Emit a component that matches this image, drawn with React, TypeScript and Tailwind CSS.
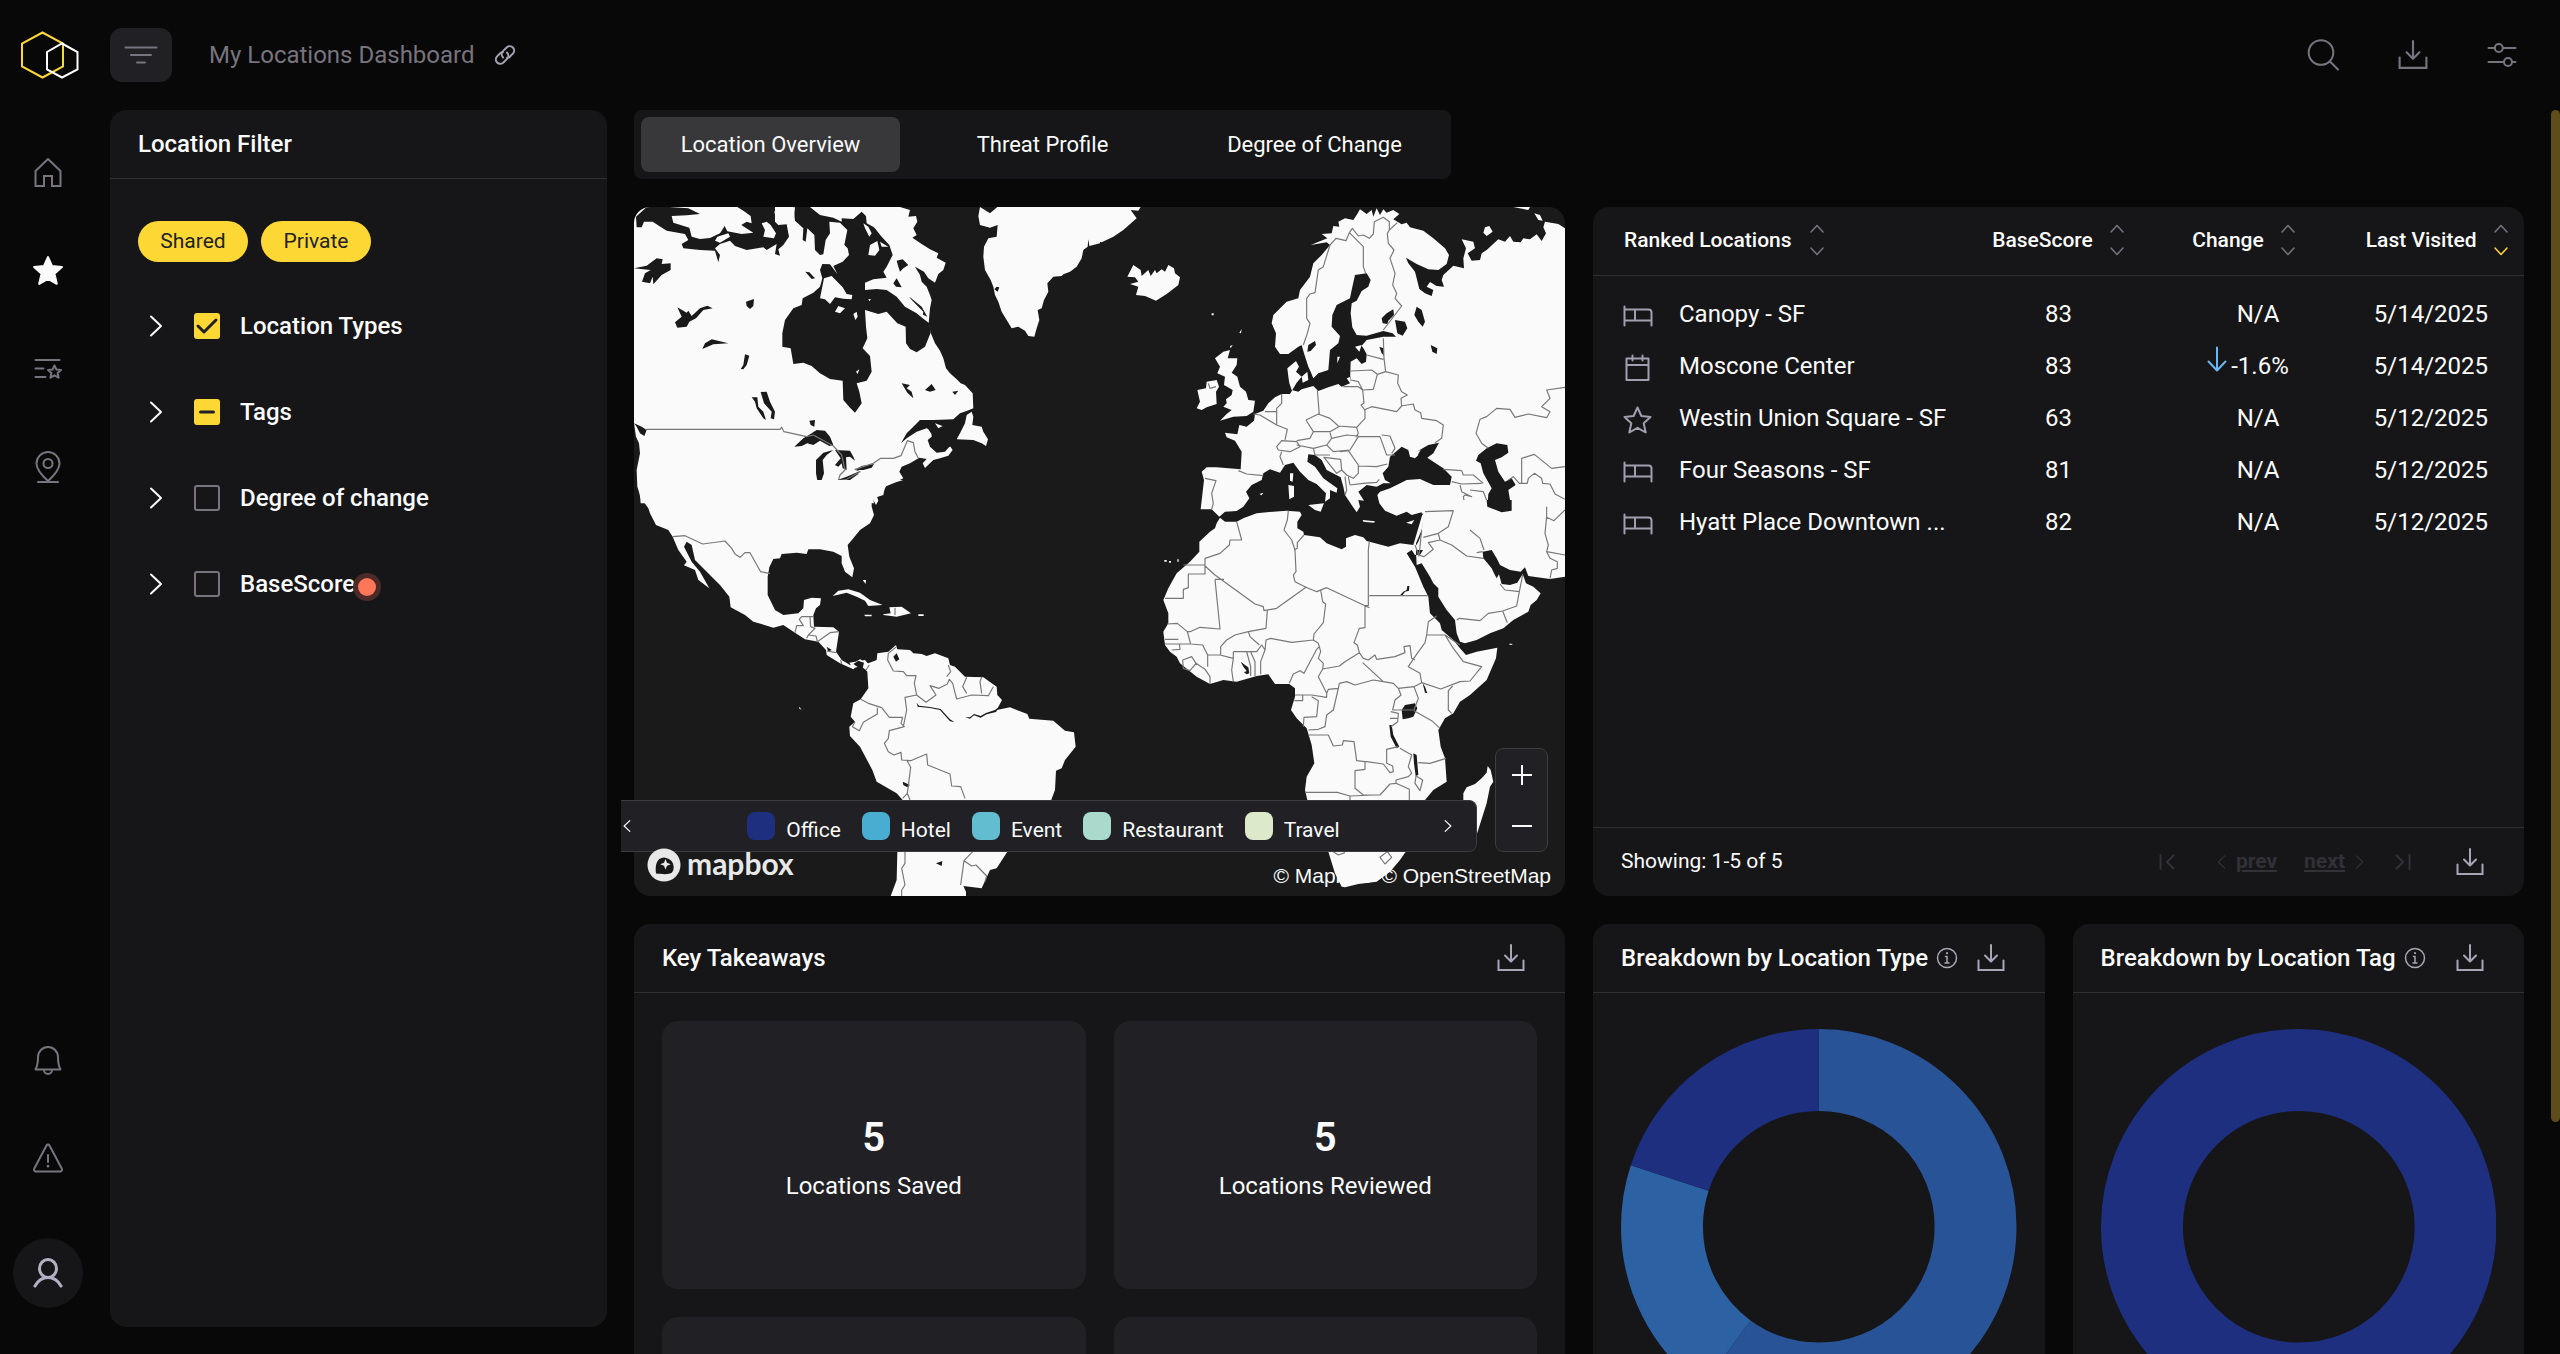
import { useState } from 'react';
import type { ReactNode } from 'react';
import clsx from 'clsx';

type IconProps = { className?: string };

function Icon({ className, box = '0 0 30 30', width = 2, children }: IconProps & { box?: string; width?: number; children: ReactNode }) {
  return (
    <svg viewBox={box} fill="none" stroke="currentColor" strokeWidth={width} strokeLinecap="round" strokeLinejoin="round" className={className} aria-hidden="true">
      {children}
    </svg>
  );
}

function Logo() {
  return (
    <svg viewBox="0 0 58 48" fill="none" strokeWidth="2" className="w-[58px] h-12" aria-hidden="true">
      <path d="M21.500 1.500 42 12.500v23L21.500 46.500 1 35.500v-23Z" stroke="#fdd835" />
      <path d="M41 12.500 56.500 21v17.500L41 46.500 26 38.500V21Z" stroke="#fff" />
    </svg>
  );
}

const HomeIcon = () => (
  <Icon className="size-[30px]"><path d="M2.500 13 15 1l12.500 12v15H19V18h-8v10H2.500Z" strokeLinejoin="miter" /></Icon>
);
const StarFilledIcon = () => (
  <Icon className="size-8 fill-current text-[#fafafa]"><path d="m15 2 3.800 8.400 9.200.9-7 6.200 2.200 9.500L15 22.300 6.800 27 9 17.500 2 11.300l9.200-.9Z" /></Icon>
);
const ListStarIcon = () => (
  <Icon className="size-[30px]">
    <path d="M2.500 6h24M2.500 14.500h8M2.500 23h10" />
    <path d="m21.500 11.500 1.900 4 4.600.5-3.400 3 1 4.700-4.100-2.400-4.100 2.400 1-4.700-3.400-3 4.600-.5Z" />
  </Icon>
);
const PinIcon = () => (
  <Icon box="0 0 30 34" className="w-[30px] h-[34px]">
    <path d="M15 31C10 26.500 3.500 19.500 3.500 13.500a11.500 11.500 0 0 1 23 0c0 6-6.500 13-11.500 17.500ZM5 32h20" />
    <circle cx="15" cy="13.500" r="4.500" />
  </Icon>
);
const BellIcon = () => (
  <Icon className="size-[30px]">
    <path d="M2.500 24.500C4.500 21 5 17 5 12a10 10 0 0 1 20 0c0 5 .5 9 2.500 12.500ZM11 25a4 4 0 0 0 8 0" />
  </Icon>
);
const AlertIcon = () => (
  <Icon className="size-[30px]">
    <path d="M13.500 2.500 1.300 25.500a2 2 0 0 0 1.700 3h24a2 2 0 0 0 1.700-3L16.500 2.500a1.700 1.700 0 0 0-3 0ZM15 12v7" />
    <path d="M15 23v.2" strokeWidth="2.600" />
  </Icon>
);
const UserIcon = () => (
  <Icon className="size-[30px] text-[#b4b0c4]" width={3}>
    <ellipse cx="15" cy="10.500" rx="8.500" ry="9" />
    <path d="M2 28c3-5.500 7-8.500 13-8.500s10 3 13 8.500" />
  </Icon>
);
const LinkIcon = () => (
  <Icon box="0 0 24 24" className="size-6 text-[#a5a2b2]">
    <path d="M10 14.500a4.700 4.700 0 0 1 .2-6.600l3.700-3.700a4.400 4.400 0 0 1 6.200 6.200l-3.300 3.300a4.400 4.400 0 0 1-2.800 1.300" />
    <path d="M14 9.500a4.700 4.700 0 0 1-.2 6.600l-3.700 3.700a4.400 4.400 0 0 1-6.200-6.200l3.300-3.300A4.400 4.400 0 0 1 10 9" />
  </Icon>
);
const SearchIcon = () => (
  <Icon box="0 0 32 32" className="size-8"><circle cx="14" cy="13.500" r="12.300" /><path d="m23 22.500 8 8" /></Icon>
);
const SlidersIcon = () => (
  <Icon className="size-[30px]">
    <path d="M1.500 8h6.300M15.800 8h12.700M1.500 22h15.500M25 22h3.500" />
    <circle cx="11.800" cy="8" r="4" />
    <circle cx="21" cy="22" r="4" />
  </Icon>
);
function DownloadIcon({ className }: IconProps) {
  return (
    <Icon box="0 0 28 28" className={className}>
      <path d="M14 1V17M8 11.500l6 6 6-6" />
      <path d="M1.500 16.500V26h25v-9.500" strokeLinejoin="miter" />
    </Icon>
  );
}
const InfoIcon = () => (
  <Icon box="0 0 22 22" width={1.500} className="size-[22px] text-[#a8a5b5]">
    <circle cx="11" cy="11" r="9.500" />
    <path d="M9.500 9.500H11V16M9 16h4" />
    <path d="M11 6v.2" strokeWidth="2" />
  </Icon>
);
const ChevronRight = ({ className }: IconProps) => (
  <Icon box="0 0 14 22" className={className}><path d="m2 1.500 10 9.500L2 20.500" /></Icon>
);
const BedIcon = () => (
  <Icon box="0 0 30 22" className="w-[30px] h-[22px]">
    <path d="M1.500 1.500v19M1.500 4.500h24a3 3 0 0 1 3 3v13M1.500 15.500h27M12 4.500v11" />
  </Icon>
);
const CalendarIcon = () => (
  <Icon box="0 0 30 28" className="w-[30px] h-7">
    <path d="M3.500 4.500h22V26h-22ZM3.500 11h22M9.500 1.500v5M19.500 1.500v5" />
  </Icon>
);
const StarIcon = () => (
  <Icon box="0 0 30 28" className="w-[30px] h-7">
    <path d="m14.500 1.500 3.900 8.500 9.100 1-6.800 6.200 2 9.300-8.200-4.700-8.200 4.700 2-9.300L1.500 11l9.100-1Z" />
  </Icon>
);

function SortIcon({ active }: { active?: boolean }) {
  return (
    <Icon box="0 0 16 32" width={1.500} className="w-4 h-8 text-[#77747f] shrink-0">
      <path d="m2 8 6-6.500L14 8" />
      <path d="m2 24 6 6.500 6-6.500" className={active ? 'stroke-[#fdd835]' : undefined} />
    </Icon>
  );
}

const topNav = [
  { label: 'Home', icon: HomeIcon },
  { label: 'Saved', icon: StarFilledIcon },
  { label: 'Lists', icon: ListStarIcon },
  { label: 'Places', icon: PinIcon },
];

const bottomNav = [
  { label: 'Notifications', icon: BellIcon },
  { label: 'Alerts', icon: AlertIcon },
];

const tabs = ['Location Overview', 'Threat Profile', 'Degree of Change'];

const filters = [
  { label: 'Location Types', state: 'on' },
  { label: 'Tags', state: 'mixed' },
  { label: 'Degree of change', state: 'off' },
  { label: 'BaseScore', state: 'off', cursor: true },
];

const legend = [
  { label: 'Office', color: 'bg-[#1e2f80]' },
  { label: 'Hotel', color: 'bg-[#48add0]' },
  { label: 'Event', color: 'bg-[#62bdd0]' },
  { label: 'Restaurant', color: 'bg-[#a9dacc]' },
  { label: 'Travel', color: 'bg-[#dceacb]' },
];

const locations = [
  { icon: BedIcon, name: 'Canopy - SF', score: 83, change: 'N/A', visited: '5/14/2025' },
  { icon: CalendarIcon, name: 'Moscone Center', score: 83, change: '-1.6%', down: true, visited: '5/14/2025' },
  { icon: StarIcon, name: 'Westin Union Square - SF', score: 63, change: 'N/A', visited: '5/12/2025' },
  { icon: BedIcon, name: 'Four Seasons - SF', score: 81, change: 'N/A', visited: '5/12/2025' },
  { icon: BedIcon, name: 'Hyatt Place Downtown ...', score: 82, change: 'N/A', visited: '5/12/2025' },
];

const takeaways = [
  { value: '5', label: 'Locations Saved' },
  { value: '5', label: 'Locations Reviewed' },
  { value: '', label: '' },
  { value: '', label: '' },
];

// Map sheets, three units to a pixel. Every sheet has its own origin.
const sheets = [
  {
    id: 'north-america',
    transform: 'translate(-14 -117) scale(.33333)',
    land: [
      'M42 351H840L870 360 865 380 888 378 892 395 880 415 890 435 877 443 905 462 930 478 955 490 950 503 977 518 970 540 955 552 945 578 925 565 912 545 885 530 900 555 905 575 920 590 930 615 935 630 930 655 926 700 932 728 945 760 960 782 970 805 978 835 990 850 1010 868 1022 880 1035 885 1058 910 1060 955 1040 963 1020 970 1000 988 940 990 900 990 880 1010 860 1030 843 1060 860 1045 890 1025 920 1015 935 1022 935 1040 923 1050 930 1070 950 1088 975 1085 990 1068 998 1080 985 1097 960 1105 940 1110 915 1134 908 1120 920 1107 898 1103 870 1120 845 1130 838 1145 850 1165 820 1180 795 1190 790 1215 760 1225 762 1240H62L60 1215 52 1190 50 1140 60 1090 57 1060 48 1040 42 1000Z',
      'M1055 965 1060 980 1057 1005 1085 1010 1090 1025 1104 1048 1098 1068 1085 1060 1060 1050 1010 1048 1020 1030 1035 1000 1040 975Z',
      'M1080 351 1110 370 1132 351H1440V460L1408 468 1405 448 1403 470 1390 480 1385 505 1370 530 1350 545 1330 553 1325 558 1300 560 1282 580 1285 605 1272 630 1265 655 1253 660 1258 690 1250 715 1243 740 1225 738 1215 722 1195 710 1175 715 1160 690 1145 665 1135 635 1125 615 1120 590 1112 570 1095 540 1090 500 1092 470 1105 445 1130 440 1133 405 1110 413 1080 405 1075 378Z',
    ],
    water: [
      'M148 351 205 355 240 372 200 376 155 378 160 398 208 413 215 440 240 447 270 444 300 430 314 408 322 424 365 432 400 428 364 405 380 395 395 400 392 378 370 362 352 351H465V395L475 405 500 403 507 440 490 465 475 478 480 497 465 492 470 462 440 480 430 472 380 480 345 468 330 452 300 462 285 475 300 495 295 517 285 482 240 480 190 475 185 462 205 450 195 432 140 422 98 395 72 395 65 412 50 412 48 380 80 351Z',
      'M520 351H570L600 375 640 383 665 395 665 385 700 387 725 365 738 378 740 400 762 412 785 440 808 465 818 495 800 530 790 545 800 563 760 568 735 578 735 600 770 597 800 600 830 620 855 650 890 670 908 685 928 700 932 728 915 770 890 787 870 777 858 760 857 710 832 700 800 665 775 672 735 660 738 710 742 745 728 775 750 798 755 845 740 872 710 880 718 905 725 940 705 968 690 953 670 930 668 872 630 867 600 850 575 828 550 818 520 822 512 775 487 770 487 730 495 690 520 655 545 645 548 625 580 608 600 590 607 565 600 540 607 522 630 523 652 552 640 528 668 515 687 495 683 475 673 465 682 420 660 398 628 395 630 430 617 450 610 493 600 495 585 480 583 435 562 415 557 455 548 450 550 415 525 392Z',
      'M42 535 80 527 110 505 128 508 125 522 152 520 152 540 125 555 100 583 98 560 90 580 66 575 75 550 92 540 70 538Z',
      'M172 652 200 668 205 662 215 678 240 655 262 647 278 655 250 660 228 685 208 695 200 710 172 713 165 697 185 680Z',
      'M247 777 255 760 275 748 325 760 280 763Z',
      'M378 635 402 627 400 648 390 657 380 648Z',
      'M375 793 388 797 380 825 370 838 362 837 370 825Z',
      'M422 906 440 905 450 935 465 965 462 988 452 985 455 965 432 940Z',
      'M395 922 412 922 415 950 430 965 438 990 430 985 410 955 405 935Z',
      'M568 992 585 990 583 1010 572 1005Z',
      'M523 1070 550 1045 575 1030 590 1020 615 1022 630 1040 640 1065 628 1068 600 1052 580 1065 562 1060 545 1068Z',
      'M588 1110 610 1088 640 1080 620 1095 608 1110 612 1150 605 1170 592 1172 588 1150Z',
      'M645 1080 690 1082 700 1100 705 1112 690 1100 678 1102 680 1140 668 1135 665 1120 655 1130 645 1125 662 1105Z',
      'M652 1170 680 1160 715 1145 715 1152 690 1170 665 1178Z',
      'M705 1140 725 1128 762 1122 755 1133 730 1140Z',
      'M845 880 870 885 860 895 875 905 880 925 862 908Z',
      'M915 900 935 882 947 900 930 905Z',
      'M830 512 848 508 865 525 850 535 840 545 835 530Z',
      'M820 580 830 565 845 592 828 590Z',
      'M868 620 905 650 922 680 905 672 880 642Z',
      'M997 905 1015 902 1005 915Z',
      'M42 1000 65 1010 80 1020 73 1038 60 1030 50 1010Z',
      'M556 545 568 547 585 565 575 567Z',
      'M930 1005 970 1010 1000 1000 1030 985 1010 1045 1015 1062 990 1070 955 1080 930 1060 940 1040 920 1010Z',
      'M1130 590 1138 592 1133 605 1123 598Z',
    ],
    islets: [
      'M600 625 612 565 635 558 668 592 680 612 697 615 695 628 670 626 645 622 630 642 615 628Z',
      'M645 665 655 648 675 655 660 670Z',
      'M700 672 710 665 713 680 706 690Z',
      'M745 495 750 465 772 453 778 480 765 497Z',
      'M425 400 440 395 452 405 468 430 462 445 430 440 435 420Z',
      'M285 452 292 440 325 430 330 440 300 458Z',
      'M463 365 475 352 525 352 522 385 495 403 470 393Z',
      'M730 400 745 410 755 430 748 440 735 415Z',
      'M780 455 805 470 785 470Z',
      'M870 625 910 665 908 678 875 660 862 640Z',
      'M708 845 718 838 713 852Z',
      'M945 1000 968 1008 955 1015Z',
      'M745 628 753 627 748 634Z',
    ],
    borders: ['M75 1018H480L485 1012 492 1025 560 1040 580 1035 640 1068 665 1095 675 1140 660 1155 655 1172 680 1168 720 1145 705 1138 760 1120 782 1105H820L843 1097 862 1052 880 1058 885 1085 895 1105'],
  },
  {
    id: 'europe',
    transform: 'translate(466 -17) scale(.33333)',
    land: [
      'M1395 115 1375 102 1335 95 1330 112 1338 130 1325 153 1310 133 1290 148 1270 145 1262 157 1240 155 1230 138 1215 155 1195 148 1160 180 1145 190 1140 210 1115 212 1103 190 1125 175 1120 155 1085 148 1098 175 1090 205 1092 235 1060 227 1030 255 1025 270 1032 290 1010 288 990 276 980 290 1000 300 995 318 975 310 958 297 950 265 945 245 925 220 918 203 950 222 985 238 1015 240 1040 222 1047 195 1035 175 1000 145 970 122 930 112 920 98 905 103 880 88 898 72 880 60 860 68 850 58 840 75 830 55 820 80 815 60 800 72 780 58 770 75 760 90 735 85 715 95 718 110 700 108 695 130 665 132 682 145 632 165 680 157 690 165 665 195 640 220 630 260 600 300 595 325 560 335 520 375 515 400 528 430 525 470 540 492 565 492 595 470 605 465 612 490 625 530 632 545 640 565 655 550 685 540 690 480 715 460 720 438 695 410 697 375 710 345 750 325 755 300 765 255 800 250 812 270 805 290 785 303 770 332 755 340 752 370 757 412 770 435 800 437 850 423 878 430 888 440 850 440 800 450 785 467 792 478 800 493 798 515 785 522 770 505 752 515 750 580 725 590 715 582 685 592 655 603 640 588 605 598 595 605 575 600 568 580 565 560 562 535 588 513 597 530 588 545 605 560 590 578 570 612 545 612 525 622 505 640 490 662 465 672 462 692 440 710 418 705 412 733 375 728 380 742 405 752 425 785 422 838 350 832 320 832 305 845 312 870 302 958 335 958 358 980 375 965 410 963 430 950 448 925 438 905 455 885 485 870 490 850 510 838 540 848 555 825 580 818 600 845 625 870 650 882 678 910 675 935 690 925 690 900 710 908 712 895 670 865 645 830 622 815 625 793 645 795 665 810 680 840 722 862 730 890 735 915 755 945 770 967 780 950 775 930 792 932 775 905 790 893 800 885 830 890 850 880 872 880 855 870 848 850 865 830 870 800 905 770 925 780 930 800 945 805 955 795 950 785 985 765 1017 758 1000 790 982 803 1000 815 1030 835 1055 860 1050 885 1000 885 960 867 920 870 890 885 870 895 840 905 832 915 838 940 855 962 890 977 920 965 935 975 970 965 968 985 965 1030 955 1055 940 1080H1395Z',
      'M370 485 390 480 383 505 412 505 410 525 395 548 412 560 420 590 438 605 445 630 465 632 460 665 440 678 400 680 360 692 380 672 395 660 370 650 380 640 378 628 395 615 398 600 372 585 375 560 352 550 360 530 345 505Z',
      'M290 655 300 635 292 600 318 595 320 575 350 570 357 590 348 605 350 642 320 652 305 660Z',
      'M82 260 100 225 122 240 125 258 145 240 152 258 165 240 170 250 185 238 195 245 205 225 222 235 225 250 240 262 235 285 200 312 168 332 135 318 108 315 115 290 90 282 115 275 105 262Z',
      'M0 51H122L115 62 92 60 110 85 70 120 40 140 5 157 0 155Z',
      'M570 850 580 850 578 875 570 872ZM565 885 582 888 582 920 568 928Z',
      'M625 945 672 940 662 965 645 960Z',
      'M788 990 825 994 822 998 790 995ZM918 998 943 990 935 1003Z',
      'M440 912 450 910ZM478 912 490 908 485 916Z',
      'M1155 112 1168 108 1178 125 1160 138 1150 128Z',
      'M1240 51H1290L1285 60ZM1303 70 1320 75 1328 92 1315 90Z',
      'M605 560 622 545 625 570 608 578ZM712 500 720 500 712 520ZM335 370H341V376H335ZM418 428 425 417 423 430ZM390 468 398 465 392 475Z',
      'M740 565 752 560 750 580ZM765 470 785 465 778 485Z',
    ],
    water: [
      'M1160 775 1190 760 1222 765 1225 788 1205 802 1185 810 1195 845 1215 875 1235 865 1247 885 1225 900 1235 960 1208 968 1162 950 1165 912 1175 895 1150 850 1142 820 1128 812 1135 795Z',
      'M885 390 915 395 922 415 908 437 892 430Z',
      'M950 350 965 360 975 395 968 410 955 395 943 375Z',
      'M992 465 1012 475 1010 492 997 485Z',
      'M845 385 860 370 880 358 882 375 865 392 862 402 848 400Z',
      'M625 465 645 453 648 465 632 483 622 485Z',
      'M838 470 850 475 852 497 845 490Z',
    ],
    islets: ['M935 790 962 780 950 800Z'],
    borders: [
      'M610 465 622 430 630 400 620 385V325L630 312 645 308 655 240 670 230 690 165 708 145 738 152 748 128 757 115 775 138 790 135 808 145 820 132 823 95 850 82 868 95V120L892 98',
      'M748 128 790 170V230L797 250',
      'M868 120 862 130 865 160 882 180 870 205 885 250 878 285 890 310 885 325 905 348 850 420',
      'M850 445 852 505 857 545 895 555 893 580 905 605 922 615 903 625 905 648 890 665 815 650 792 660M903 648 940 642 945 660 962 668 965 685 1010 692 1030 705 1025 745 1005 758',
      'M800 495 850 508M752 543 815 540 832 553 857 545M832 553 820 598 788 600 775 575 752 570M730 590H775L788 600 792 640 783 645 795 660V685L770 712 775 730 768 742',
      'M652 600 658 675M618 690 655 672 690 685 715 708 770 712M618 690 640 725 690 725 720 708M640 725 630 745 590 752M530 770 545 752 590 755 600 770 570 785 535 780ZM690 728 695 745 740 735 775 738M695 745 680 765 640 775 590 765M680 765 700 785 750 780 775 740 840 740 860 795 885 795',
      'M545 612V640L530 655V705L562 718 555 750M530 705 480 675 460 672M495 665 530 665M545 785 540 800 550 825M415 842 440 852 490 857M315 865 348 872 335 910 340 940 335 958',
      'M640 775 645 795 690 795M672 802 722 808 725 840 710 850ZM720 785 745 782 775 825V850L760 865 740 855 725 840M775 828 830 830 862 822M735 860 740 900 735 915M750 885 790 880 830 877 838 868M745 860 750 885M845 735 870 738 885 775 875 790',
      'M1395 592 1340 600 1350 625 1325 650 1350 665 1340 683 1285 672 1245 682 1230 658 1190 655 1160 680 1140 688 1128 730 1145 760 1165 775',
      'M1265 880V805L1303 793 1355 835 1395 830M1235 950 1280 938 1315 942 1340 970M1225 870 1240 860 1258 880 1282 880 1285 865 1303 850 1325 865 1328 880 1350 882 1365 912 1395 928M1030 838 1085 842 1090 855 1120 855 1150 880M1055 875 1085 882 1145 880M1080 885 1085 905 1115 920 1095 915 1090 920 1097 958 975 965M1110 900 1150 905 1162 935M1097 958 1122 985 1110 1020 1140 1045 1150 1080',
      'M325 580 330 595 348 590',
    ],
  },
  {
    id: 'south-america',
    transform: 'translate(-14 273) scale(.33333)',
    land: [
      'M55 0H850L800 15 790 35 768 40 775 62 768 75 755 50 755 80 762 105 750 130 720 150 700 175 683 195 688 230 702 265 697 292 675 275 665 250 665 228 640 215 600 208 565 208 560 222 530 218 485 222 480 235 460 237 448 262 443 290 443 345 465 390 490 405 535 400 550 385 552 360 575 353 603 355 600 375 588 385 580 405 582 440 640 442 657 455 648 515 665 540 690 555 720 538 745 550 770 540 772 520 805 515 828 495 832 508 870 510 880 520 905 522 920 528 945 520 985 535 990 555 1005 560 1035 590 1090 592 1130 620 1132 645 1146 660 1130 690 1170 682 1222 702 1228 716 1300 722 1335 752 1362 757 1367 800 1335 840 1325 865 1308 872 1305 930 1290 970 1230 1050 1160 1118 1130 1165 1110 1170 1085 1225 1030 1218 1038 1235V1248H812L830 1200 832 1115 848 960 830 940 770 905 757 870 720 800 690 768 688 740 705 725 692 710 700 670 722 658 745 625 742 575 720 550 700 568 660 550 620 525 618 510 595 485 555 478 525 458 490 435 460 443 400 425 375 405 332 382 328 350 300 315 270 285 225 240 215 195 200 185 192 200 215 245 240 275 268 325 235 300 225 270 192 256 200 245 175 210 158 170 145 150 108 135 90 100 85 85 60 50Z',
      'M638 348 655 332 685 328 720 338 750 360 788 375 745 378 735 362 710 350 680 338Z',
      'M790 403 812 400 808 382 845 380 873 400 830 410 790 405ZM733 404H755V409H735ZM895 403H911V408H895ZM728 300 738 300 737 312ZM538 680 545 690 537 685Z',
      'M688 548 705 545 735 540 748 555 738 570 722 558 700 565Z',
    ],
    water: [
      'M820 530 830 520 838 538 828 545Z',
      'M620 500 635 510 625 515Z',
      'M848 905 870 915 862 922 850 915Z',
      'M948 1150 967 1143 965 1158Z',
      'M700 552 715 542 732 548 728 565 712 560Z',
      'M890 668 893 680 930 684 960 690 990 724 1003 726 990 718 962 687 930 681 897 677ZM1035 712 1050 716 1062 706 1082 713 1100 703 1128 696 1138 680 1125 690 1098 699 1082 708 1062 702 1050 712Z',
    ],
    islets: [],
    borders: [
      'M158 170 195 167 248 192 315 183 335 205 345 222 360 232 375 218H390L422 275 450 281',
      'M525 458 530 437 550 437 538 418 545 410H580M570 410 572 440 585 445 565 465 560 475M565 465 588 468 592 485 630 458 657 455M620 513 648 518M662 540 665 552M738 570 748 555',
      'M830 500 805 520 803 540 820 573 850 575 860 587H888L883 610 890 645 855 652 860 690 850 740M722 658 745 670 785 683 808 712 848 712 843 730 853 740 808 752 805 775 793 790 805 815 822 825 843 817 845 840 872 842 920 822 923 855 990 882 995 918 1022 920 1035 955M772 683V702L730 727 718 752 697 740 705 725',
      'M890 645 918 667 948 645 930 617 957 625 982 612 988 598 998 610 1005 638 1010 657 1055 645 1105 647 1120 620M985 555 992 575 980 590M1040 592 1028 620 1040 640M1085 592 1080 605 1085 640',
      'M860 840 872 862 862 940 848 955M862 940 870 960M855 1115V1150L845 1165 855 1215 845 1230V1248M1058 1115 1032 1142 1022 1215M1032 1142 1055 1158 1068 1155 1100 1188 1095 1205M825 383V405',
    ],
  },
  {
    id: 'africa',
    transform: 'translate(466 273) scale(.33333)',
    land: [
      'M360 113 375 125 410 125 430 115 470 100 520 95 560 92 600 95 605 105 592 125 592 145 610 155 612 165 660 172 680 190 725 208 738 200 738 175 765 165 790 172 800 183 865 200 900 190 940 195 968 100H975V200L960 225 945 225 935 210 920 220 945 260 970 320 985 350 990 400 1020 430 1025 450 1060 480 1080 505 1098 525 1130 515 1192 503 1188 535 1160 600 1110 645 1080 665 1060 700 1035 715 1015 750 1022 800 1035 835 1040 905 1000 930 975 960 975 1000 950 1080 915 1118 900 1140 870 1175 830 1205 775 1212 735 1222 725 1220 705 1180 685 1115 650 1040 622 960 615 930 620 890 643 850 635 795 620 745 590 715 573 690 585 650 585 625 568 612 525 612 505 583 470 588 410 605 370 600 330 612 290 590 240 550 230 530 210 515 195 495 190 455 205 430 205 400 190 360 205 325 230 280 270 245 298 215 298 185 330 155 345 145 350 130Z',
      'M965 60V100L972 110 965 150 948 190 948 215 950 255 965 250 990 290 1000 310 1015 325 1015 350 1040 390 1065 420 1070 460 1080 485 1095 490 1130 480 1170 460 1210 445 1240 420 1285 395 1292 375 1310 360 1322 340 1300 320 1278 310 1268 282 1252 308 1230 315 1205 312 1197 283 1190 295 1182 280 1175 265 1150 235 1148 215 1175 210 1190 235 1200 255 1230 270 1262 275 1275 262 1285 288 1350 297 1395 290V60Z',
      'M1090 940 1100 922 1125 912 1145 895 1160 878 1163 858 1172 870 1180 905 1170 920 1160 970 1132 1058 1110 1040 1090 980Z',
      'M1228 491H1237V494H1228ZM193 240H200V245H193ZM207 243H213V248H207ZM232 238H236V245H232Z',
    ],
    water: [
      'M905 690 915 675 945 670 952 685 940 710 925 715 908 718Z',
      'M868 735 875 735 880 765 898 800 890 805 872 770Z',
      'M940 820 950 825 955 885 947 888 942 850Z',
      'M968 610 975 620 982 640 975 638Z',
      'M422 545 435 555 445 562 448 580 440 583 432 577 440 573 430 560Z',
      'M898 348 910 335 920 330 922 318 928 318 927 332 915 335 908 345Z',
      'M1160 60H1235V92L1205 97 1162 80Z',
    ],
    islets: [],
    borders: [
      'M410 125 425 180H390L388 195 360 220 315 235V258L345 285 465 372 490 380 492 392 530 385 618 322 585 305 580 285 588 275 585 210 575 180 552 150 562 120 565 92M582 210 592 205V188L612 165',
      'M195 355H250V328L265 323V282H315V255H250M345 298 360 447 300 442 270 455 262 455 232 430 202 432M345 298H372M502 392 498 445 445 455 405 465 380 480 362 500 362 525',
      'M618 322 650 335 680 323 808 383M662 330 668 365 677 372 670 428 642 462 640 480 575 487 512 475 498 480 495 510 482 545V583M808 183 805 210V377H795V443L778 445 762 488 772 495 778 518 735 545 718 558 668 567M808 347H985',
      'M262 455 272 492 308 495 323 525 360 525 400 535 395 570 400 605M195 492H272M195 478 235 478M215 510 240 508 238 492M248 540 275 530 288 550 270 572 250 565ZM288 550 315 568 330 590V612M323 525V560M400 515H440L452 560V588M400 515V535M452 515 465 545V588M440 515H470L485 495 495 510M445 455 450 470 478 495',
      'M568 610 580 582 600 572 612 580 650 508 658 500 662 515 655 535 670 550 668 567 655 590 680 640V652L635 645H585M640 480 655 490 662 515M608 645V662H583M680 640 685 628 715 625 718 610 740 605 765 615 820 600 850 605 788 548M715 625 700 690 680 705 675 740 655 748 625 750M635 650 655 662 650 710 612 712 610 740M625 765H685L700 798 727 795 730 782 762 785 770 842 795 845 800 845 850 852 870 878 880 875 878 858 860 850 860 808 895 800',
      'M778 518 790 535 805 540 825 525 830 538 885 530 915 518 912 500 930 497 935 535 945 540M850 605 880 610 895 625 942 620 965 608 1022 627 1080 605 1110 603 1145 560 1090 545 1060 505 1035 465 980 465 975 488 945 530 925 560 960 580 965 608M980 465 985 425 1010 408M1035 465 1080 495M1058 618 1045 632V690L1055 700M895 625 903 645 885 660 878 690H942L955 655 942 620M942 692 995 722 1020 745M872 695 895 700 893 725 873 740M870 715H893',
      'M795 845V868L765 872V925L790 945 840 945 870 912 888 910 888 900 925 890 935 880 925 860 935 825 900 805M888 910 928 928V960M955 848 990 850 1038 835M948 888 968 900 960 932 945 910ZM615 937H712L750 948 820 945M750 960V948M840 1132 862 1115 875 1132 855 1152ZM700 1115 715 1125 735 1118',
      'M975 95 1060 92 1045 140 1015 160 970 172M1015 160 1020 180 985 188 1000 208 972 230 955 225M1020 180 1055 195 1100 228 1150 235M1130 218 1148 215M1070 420 1078 415 1140 422 1165 400 1208 393 1222 428M1208 393 1250 378 1258 335 1215 330 1200 312M1258 335 1268 285M1340 80V110L1335 160 1345 195 1340 215 1395 225M1340 112 1362 122 1395 90M1340 215 1350 235 1372 245V265L1355 270 1350 295M1110 150 1140 175 1152 210M945 195 957 228 965 150',
    ],
  },
];

function WorldMap() {
  return (
    <svg viewBox="0 0 931 689" preserveAspectRatio="xMidYMid slice" className="size-full rounded-2xl bg-[#1a1a1a]" role="img" aria-label="World map">
      {sheets.map((sheet) => (
        <g key={sheet.id} transform={sheet.transform} strokeLinejoin="round">
          <path d={sheet.land.join('')} fill="#fafafa" />
          <path d={sheet.water.join('')} fill="#1a1a1a" />
          <path d={sheet.islets.join('')} fill="#fafafa" />
          <path d={sheet.borders.join('')} fill="none" stroke="#777" strokeWidth="3.500" />
        </g>
      ))}
    </svg>
  );
}

function MapboxLogo() {
  return (
    <a href="#mapbox" className="flex items-center gap-1.5 text-[#e8e8e8]">
      <svg viewBox="0 0 34 34" className="size-[34px]" aria-hidden="true">
        <circle cx="17" cy="17" r="16.500" fill="#e8e8e8" />
        <path d="M9 25.500c-.8-7 .2-11.500 3-14.300a9.500 9.500 0 0 1 13 13.400c-2.800 2-8.500 1.800-16 .9Z" fill="#161616" />
        <path d="m18.500 11 1.500 3.800 3.800 1.500-3.800 1.500-1.500 3.800-1.500-3.800-3.800-1.500 3.800-1.500Z" fill="#e8e8e8" />
      </svg>
      <span className="font-[Lato,sans-serif] font-bold text-[30px] leading-8 pb-1">mapbox</span>
    </a>
  );
}

function MapPanel() {
  return (
    <section className="relative h-[689px]">
      <WorldMap />
      {/* Legend */}
      <div className="absolute -left-[13px] bottom-[44px] w-[856px] h-[52px] flex items-center justify-between bg-[#212125] border-y border-r border-[#3b3b40] rounded-r-lg pr-6">
        <button type="button" aria-label="Previous" className="pl-0.5">
          <ChevronRight className="w-2 h-[14px] rotate-180" />
        </button>
        <ul className="flex items-center gap-[21px] pl-3">
          {legend.map(({ label, color }) => (
            <li key={label} className="flex items-center gap-[11px]">
              <span className={clsx('size-7 rounded-lg', color)} />
              <span className="text-[21px] leading-7 pt-2">{label}</span>
            </li>
          ))}
        </ul>
        <button type="button" aria-label="Next">
          <ChevronRight className="w-2 h-[14px]" />
        </button>
      </div>
      {/* Zoom */}
      <div className="absolute right-[17px] bottom-[44px] w-[53px] h-[104px] flex flex-col bg-[#212125] border border-[#3b3b40] rounded-lg">
        <button type="button" aria-label="Zoom in" className="flex-1 grid place-items-center">
          <Icon box="0 0 20 20" className="size-5"><path d="M10 .5v19M.5 10h19" /></Icon>
        </button>
        <button type="button" aria-label="Zoom out" className="flex-1 grid place-items-center">
          <Icon box="0 0 20 20" className="size-5"><path d="M.5 10h19" /></Icon>
        </button>
      </div>
      <div className="absolute left-[13px] bottom-[13px]">
        <MapboxLogo />
      </div>
      <p className="absolute right-3.5 bottom-1.5 flex gap-3 font-['Liberation_Sans',sans-serif] text-[21px] leading-7 text-[#fafafa]">
        <a href="#mapbox">© Mapbox</a>
        <a href="#osm">© OpenStreetMap</a>
      </p>
    </section>
  );
}

function FilterPanel() {
  return (
    <aside className="w-[497px] shrink-0 mb-[27px] rounded-2xl bg-[#161618]">
      <h2 className="h-[69px] flex items-center px-7 border-b border-[#303034] text-2xl font-medium">Location Filter</h2>
      <div className="px-7 pt-[42px]">
        <div className="flex gap-[13px]">
          {['Shared', 'Private'].map((label) => (
            <button key={label} type="button" className="h-[41px] w-[110px] rounded-full bg-[#fdd835] text-[#212125] text-[21px]">
              {label}
            </button>
          ))}
        </div>
        <ul className="pt-[21px]">
          {filters.map(({ label, state, cursor }) => (
            <li key={label} className="h-[86px] flex items-center">
              <button type="button" aria-label={'Expand ' + label} className="w-14 pl-[11px]">
                <ChevronRight className="w-[14px] h-[22px]" />
              </button>
              <label className="relative flex items-center gap-5 text-2xl font-medium">
                <input
                  type="checkbox"
                  defaultChecked={state !== 'off'}
                  className={clsx(
                    'appearance-none size-[26px] rounded-[3px]',
                    state === 'off' ? 'border-2 border-[#77747f]' : 'bg-[#fdd835]'
                  )}
                />
                {state !== 'off' && (
                  <Icon box="0 0 26 26" width={3} className="absolute left-0 top-[3px] size-[26px] text-[#212125] pointer-events-none">
                    <path d={state === 'on' ? 'm4 13 6 6L22 7' : 'M6.500 13h13'} />
                  </Icon>
                )}
                {label}
                {cursor && (
                  <span className="absolute -right-[26px] top-[5px] size-7 rounded-full bg-[#4b2a28] grid place-items-center">
                    <span className="size-[18px] rounded-full bg-[#ff7659]" />
                  </span>
                )}
              </label>
            </li>
          ))}
        </ul>
      </div>
    </aside>
  );
}

function RankedLocations() {
  return (
    <section className="h-[689px] flex flex-col rounded-2xl bg-[#161618]">
      <table className="w-full table-fixed text-2xl">
        <colgroup>
          <col className="w-[41%]" />
          <col className="w-[18%]" />
          <col className="w-[24%]" />
          <col className="w-[17%]" />
        </colgroup>
        <thead>
          <tr className="h-[68px] border-b border-[#303034] text-[21px]">
            <th className="pl-[31px] pb-0.5 font-medium">
              <button type="button" className="flex items-center gap-[17px]">Ranked Locations <SortIcon /></button>
            </th>
            <th className="pb-0.5 font-medium">
              <button type="button" className="flex items-center gap-4 mx-auto">BaseScore <SortIcon /></button>
            </th>
            <th className="pb-0.5 font-medium pr-5">
              <button type="button" className="flex items-center gap-4 mx-auto">Change <SortIcon /></button>
            </th>
            <th className="pb-0.5 font-medium pr-4">
              <button type="button" className="flex items-center gap-4 ml-auto whitespace-nowrap">Last Visited <SortIcon active /></button>
            </th>
          </tr>
        </thead>
        <tbody className="before:block before:h-3">
          {locations.map(({ icon: RowIcon, name, score, change, down, visited }) => (
            <tr key={name} className="h-[52px]">
              <td className="pl-[30px]">
                <span className="flex items-center gap-[26px] whitespace-nowrap">
                  <span className="text-[#a19eb0] pt-1"><RowIcon /></span>
                  {name}
                </span>
              </td>
              <td className="text-center">{score}</td>
              <td className={clsx('text-center', down ? 'pr-3' : 'pl-2')}>
                <span className="inline-flex items-center gap-1">
                  {down && (
                    <Icon box="0 0 20 26" className="w-5 h-[26px] mb-3.5 text-[#6cb8ee]">
                      <path d="M10 1.500V24M1.500 15.500l8.500 9 8.500-9" />
                    </Icon>
                  )}
                  {change}
                </span>
              </td>
              <td className="text-right pr-[36px]">{visited}</td>
            </tr>
          ))}
        </tbody>
      </table>
      <footer className="mt-auto h-[69px] flex items-center justify-between border-t border-[#303034] pl-7 pr-10 text-[21px]">
        <span>Showing: 1-5 of 5</span>
        <div className="flex items-center text-[#313137]">
          <button type="button" disabled aria-label="First page" className="mr-[42px]">
            <Icon box="0 0 16 16" className="size-4"><path d="M1.500 1v14M14.500 1.500 8 8l6.500 6.500" /></Icon>
          </button>
          <button type="button" disabled className="flex items-center gap-2.5 mr-[27px] font-bold underline">
            <ChevronRight className="w-[9px] h-4 rotate-180" />prev
          </button>
          <button type="button" disabled className="flex items-center gap-2.5 mr-[31px] font-bold underline">
            next<ChevronRight className="w-[9px] h-4" />
          </button>
          <button type="button" disabled aria-label="Last page" className="mr-[45px]">
            <Icon box="0 0 16 16" className="size-4"><path d="M14.500 1v14M1.500 1.500 8 8l-6.500 6.500" /></Icon>
          </button>
          <DownloadButton />
        </div>
      </footer>
    </section>
  );
}

function DownloadButton() {
  return (
    <button type="button" aria-label="Download" className="text-[#a9a5b8]">
      <DownloadIcon className="size-7" />
    </button>
  );
}

function PanelHeader({ title, info }: { title: string; info?: boolean }) {
  return (
    <header className="h-[69px] flex items-center justify-between pl-7 pr-10 border-b border-[#303034]">
      <h2 className="flex items-center gap-2 text-2xl font-medium whitespace-nowrap">
        {title}
        {info && <InfoIcon />}
      </h2>
      <DownloadButton />
    </header>
  );
}

type Slice = { share: number; color: string };

function Donut({ slices }: { slices: Slice[] }) {
  const radius = 157;
  const length = 2 * Math.PI * radius;
  let start = 0;
  return (
    <svg viewBox="0 0 396 396" className="w-full" role="img" aria-label="Breakdown chart">
      <g transform="rotate(-90 198 198)" fill="none" strokeWidth="82">
        {slices.map(({ share, color }) => {
          const offset = -start * length;
          start += share;
          return (
            <circle key={color} cx="198" cy="198" r={radius} stroke={color} strokeDasharray={`${share * length} ${length}`} strokeDashoffset={offset} />
          );
        })}
      </g>
    </svg>
  );
}

function BreakdownPanel({ title, slices }: { title: string; slices: Slice[] }) {
  return (
    <section className="rounded-2xl bg-[#161618]">
      <PanelHeader title={title} info />
      <div className="px-7 pt-9 pb-7">
        <Donut slices={slices} />
      </div>
    </section>
  );
}

export default function App() {
  const [tab, setTab] = useState(tabs[0]);

  return (
    <div className="h-screen overflow-hidden flex bg-[#080808] text-[#fafafa] font-[Roboto,sans-serif]">
      {/* Sidebar */}
      <nav className="w-24 shrink-0 flex flex-col items-center text-[#77747f]">
        <a href="#home" aria-label="Dashboard" className="h-[110px] flex items-center pl-1"><Logo /></a>
        <div className="flex flex-col items-center gap-[54px] pt-[41px]">
          {topNav.map(({ label, icon: NavIcon }) => (
            <a key={label} href={'#' + label.toLowerCase()} aria-label={label} className="size-11 grid place-items-center">
              <NavIcon />
            </a>
          ))}
        </div>
        <div className="mt-auto flex flex-col items-center gap-[54px]">
          {bottomNav.map(({ label, icon: NavIcon }) => (
            <a key={label} href={'#' + label.toLowerCase()} aria-label={label} className="size-11 grid place-items-center">
              <NavIcon />
            </a>
          ))}
        </div>
        <button type="button" aria-label="Profile" className="mt-[58px] mb-[46px] size-[70px] rounded-full bg-[#161618] grid place-items-center">
          <UserIcon />
        </button>
      </nav>

      <div className="flex-1 min-w-0 flex flex-col pl-3.5">
        {/* Header */}
        <header className="h-[110px] shrink-0 flex items-center justify-between pr-[43px] text-[#77747f]">
          <div className="flex items-center">
            <button type="button" aria-label="Toggle filters" className="w-[62px] h-[54px] rounded-xl bg-[#212125] grid place-items-center">
              <Icon box="0 0 34 18" className="w-[34px] h-[18px]"><path d="M1.500 1.500h31M7 9h20M13 16.500h8" /></Icon>
            </button>
            <h1 className="ml-[37px] text-2xl">My Locations Dashboard</h1>
            <button type="button" aria-label="Copy link" className="ml-[18px]"><LinkIcon /></button>
          </div>
          <div className="flex items-center gap-[59px]">
            <button type="button" aria-label="Search"><SearchIcon /></button>
            <button type="button" aria-label="Download"><DownloadIcon className="size-[30px]" /></button>
            <button type="button" aria-label="Settings"><SlidersIcon /></button>
          </div>
        </header>

        <div className="flex-1 min-h-0 flex gap-[27px]">
          <FilterPanel />

          <main className="flex-1 min-w-0 flex flex-col gap-7">
            <div role="tablist" className="self-start shrink-0 h-[69px] flex gap-[13px] p-[7px] rounded-lg bg-[#161618]">
              {tabs.map((label) => (
                <button
                  key={label}
                  type="button"
                  role="tab"
                  aria-selected={tab === label}
                  onClick={() => setTab(label)}
                  className={clsx('w-[259px] rounded-lg text-[22px]', tab === label && 'bg-[#38383a]')}
                >
                  {label}
                </button>
              ))}
            </div>

            <div className="grid grid-cols-2 gap-7">
              <MapPanel />
              <RankedLocations />

              <section className="rounded-2xl bg-[#161618]">
                <PanelHeader title="Key Takeaways" />
                <div className="grid grid-cols-2 gap-7 p-7">
                  {takeaways.map(({ value, label }, i) => (
                    <div key={i} className="h-[268px] flex flex-col items-center justify-center gap-2 pt-1.5 rounded-2xl bg-[#212125]">
                      <strong className="text-[40px] leading-12 font-semibold">{value}</strong>
                      <span className="text-2xl">{label}</span>
                    </div>
                  ))}
                </div>
              </section>

              <div className="grid grid-cols-2 gap-7">
                <BreakdownPanel
                  title="Breakdown by Location Type"
                  slices={[
                    { share: 0.6, color: '#285397' },
                    { share: 0.2, color: '#2c62a3' },
                    { share: 0.2, color: '#1e2f80' },
                  ]}
                />
                <BreakdownPanel title="Breakdown by Location Tag" slices={[{ share: 1, color: '#1e2f80' }]} />
              </div>
            </div>
          </main>

          {/* Scroll thumb */}
          <div className="w-[9px] h-[1012px] shrink-0 rounded-full bg-[#5e4d1a]" />
        </div>
      </div>
    </div>
  );
}
